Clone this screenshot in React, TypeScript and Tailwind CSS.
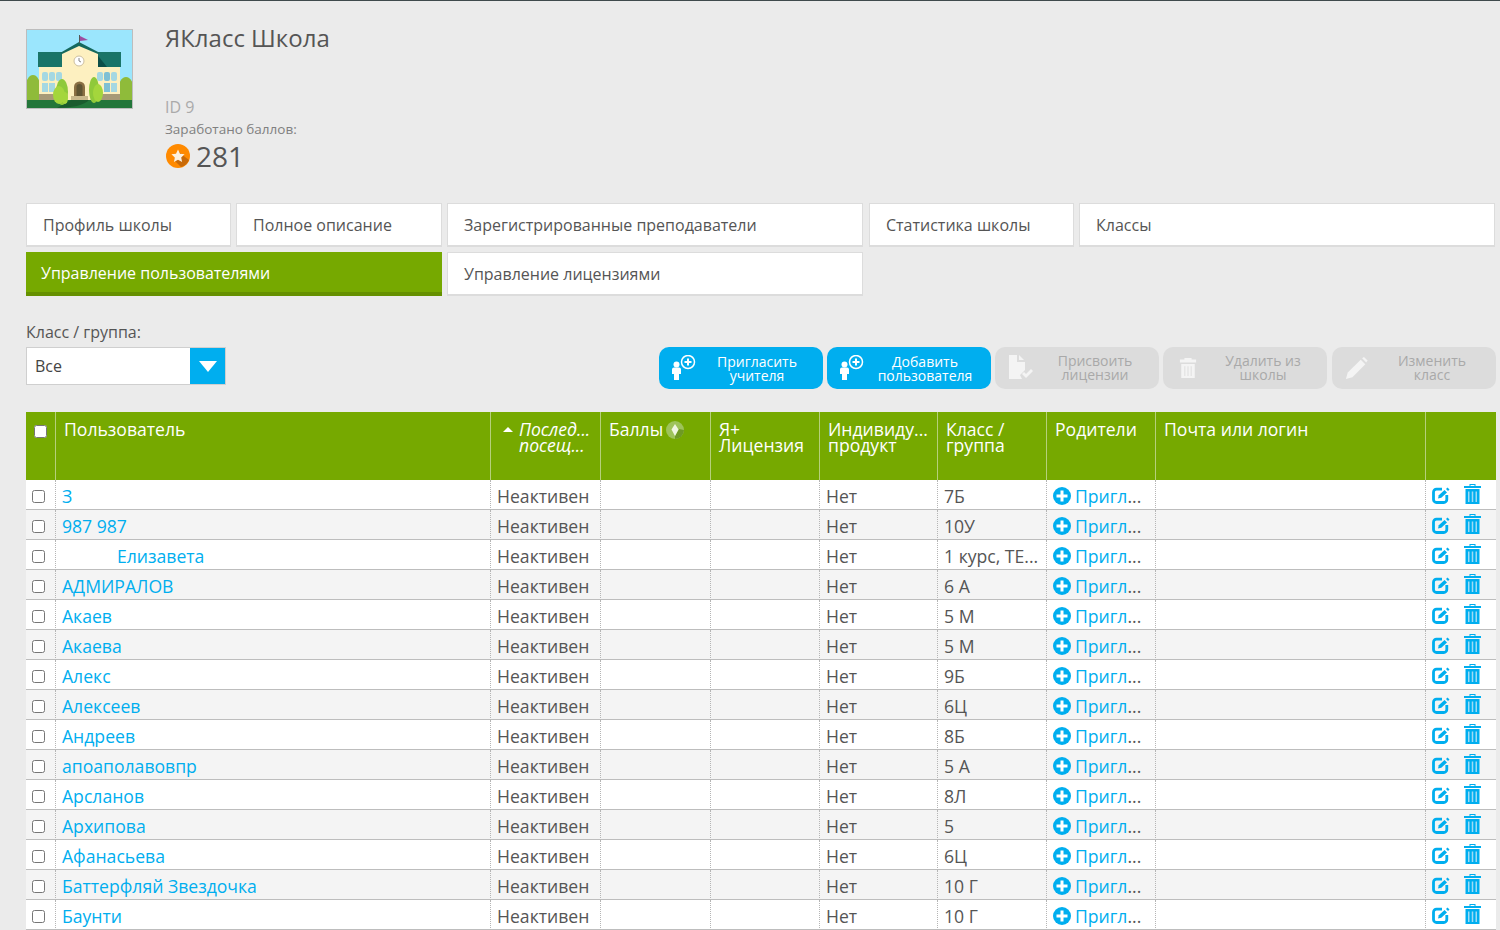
import type { ReactNode } from "react";

const rows = [
  { name: "З", group: "7Б" },
  { name: "987 987", group: "10У" },
  { name: "Елизавета", group: "1 курс, ТЕ...", indent: true },
  { name: "АДМИРАЛОВ", group: "6 А" },
  { name: "Акаев", group: "5 М" },
  { name: "Акаева", group: "5 М" },
  { name: "Алекс", group: "9Б" },
  { name: "Алексеев", group: "6Ц" },
  { name: "Андреев", group: "8Б" },
  { name: "апоаполавовпр", group: "5 А" },
  { name: "Арсланов", group: "8Л" },
  { name: "Архипова", group: "5" },
  { name: "Афанасьева", group: "6Ц" },
  { name: "Баттерфляй Звездочка", group: "10 Г" },
  { name: "Баунти", group: "10 Г" },
];

const SchoolPicture = () => (
  <svg viewBox="0 0 105 78" className="block w-full h-full">
    <rect width="105" height="78" fill="#9be6fd" />
    <ellipse cx="6" cy="60" rx="8" ry="15" fill="#8fbb3a" />
    <ellipse cx="99" cy="61" rx="8" ry="14" fill="#8fbb3a" />
    <rect x="12" y="37" width="81" height="30" fill="#fdf0c0" />
    <rect x="12" y="64" width="81" height="6" fill="#a79a78" />
    <path d="M11 22h25v15H11z" fill="#1a7468" />
    <path d="M68 22h26v15H76z" fill="#1a7468" />
    <path d="M68 22l12 15H68z" fill="#0c4f48" />
    <path d="M35 22l17-8 19 8v48H35z" fill="#fdf0c0" />
    <path d="M33 23l19-11 21 11-2 1-19-8-17 8z" fill="#14685d" />
    <rect x="52" y="5" width="1" height="8" fill="#555" />
    <path d="M53 6l8 4-8 1z" fill="#9c4da0" />
    <circle cx="52" cy="31" r="5" fill="#fff" stroke="#ccbfa0" />
    <path d="M52 28v3l2 1" stroke="#555" fill="none" strokeWidth="0.7" />
    <g fill="#a5d8e2">
      <rect x="15" y="42" width="6" height="9" rx="2" />
      <rect x="22" y="42" width="6" height="9" rx="2" />
      <rect x="29" y="42" width="6" height="9" rx="2" />
      <rect x="15" y="53" width="6" height="9" />
      <rect x="22" y="53" width="6" height="9" />
      <rect x="70" y="42" width="6" height="9" rx="2" />
      <rect x="77" y="42" width="6" height="9" rx="2" fill="#7fc0d4" />
      <rect x="84" y="42" width="6" height="9" rx="2" />
      <rect x="77" y="53" width="6" height="9" fill="#7fc0d4" />
      <rect x="84" y="53" width="6" height="9" />
    </g>
    <path d="M47 68V57a5.500 5.500 0 0 1 11 0v11z" fill="#8a6f43" />
    <path d="M49.500 67V57a3 3 0 0 1 6 0v10z" fill="#5f5433" />
    <rect x="44" y="66" width="17" height="4" fill="#c9b88c" />
    <rect x="0" y="70" width="105" height="8" fill="#23763a" />
    <path d="M30 78c14 0 28-3 32-8H44z" fill="#1a5c2e" />
    <ellipse cx="35" cy="62" rx="6" ry="13" fill="#8fc93a" />
    <ellipse cx="32" cy="65" rx="6" ry="9" fill="#a4d63c" />
    <ellipse cx="38" cy="68" rx="3" ry="6" fill="#a4d63c" />
    <ellipse cx="67" cy="60" rx="5" ry="13" fill="#8fc93a" />
    <ellipse cx="71" cy="63" rx="5" ry="9" fill="#a4d63c" />
  </svg>
);

const StarBadge = () => (
  <svg viewBox="0 0 24 24" className="w-6 h-6 shrink-0">
    <circle cx="12" cy="12" r="12" fill="#ff8a00" />
    <path d="M8 16l4-9 7 6 4 3a12 12 0 0 1-8 7z" fill="#c96a08" />
    <path d="M12 5.500l2 4.200 4.600.6-3.400 3.100.9 4.600-4.100-2.300-4.100 2.300.9-4.600-3.400-3.100 4.600-.6z" fill="#fdf1df" />
  </svg>
);

const UserPlus = () => (
  <svg viewBox="0 0 26 26" className="w-[26px] h-[26px]" fill="#fff">
    <circle cx="5.500" cy="9.500" r="3" />
    <path d="M1 14.500a2 2 0 0 1 2-2h5a2 2 0 0 1 2 2V19H8v6H3v-6H1z" />
    <circle cx="17" cy="7" r="6.500" fill="none" stroke="#fff" strokeWidth="1.500" />
    <path d="M16 3.500h2V6h2.500v2H18v2.500h-2V8h-2.500V6H16z" />
  </svg>
);

const FileCheck = () => (
  <svg viewBox="0 0 26 28" className="w-[26px] h-[28px]" fill="#f4f4f4">
    <path d="M2 1h8v7h8v8l-5 5 2 4H2z" />
    <path d="M12 1l5 5h-5z" />
    <path d="M15 20l2-2 2 2 5-5 2 2-7 7z" />
  </svg>
);

const GreyTrash = () => (
  <svg viewBox="0 0 20 24" className="w-[18px] h-[22px]" fill="#f4f4f4">
    <path d="M6 1h8v1.500h5V6H1V2.500h5z" />
    <path d="M2.500 7.500h15V23h-15zM6 10v11h1V10zm3.500 0v11h1V10zM13 10v11h1V10z" fillRule="evenodd" />
  </svg>
);

const GreyPencil = () => (
  <svg viewBox="0 0 26 26" className="w-[24px] h-[24px]" fill="#f4f4f4">
    <path d="M1 25l2-7L17 4l5 5L8 23z" />
    <path d="M18.500 2.500l2-1.500 4 4-1.500 2z" />
  </svg>
);

const ActionButton = ({ icon, lines, active }: { icon: ReactNode; lines: string[]; active?: boolean }) => (
  <div
    className={`w-[164px] h-[42px] rounded-[10px] flex items-center pl-[11px] ${
      active ? "bg-[#00aeef] text-white" : "bg-[#dcdcdc] text-[#a9a9a9]"
    }`}
  >
    <div className="w-[28px] flex justify-center shrink-0">{icon}</div>
    <div className={`flex-1 text-center text-[14px] leading-[14px] ${active ? "pr-[7px] pt-[2px]" : "pr-[3px]"}`}>
      {lines.map((l) => (
        <div key={l}>{l}</div>
      ))}
    </div>
  </div>
);

const Tab = ({ label, width, active }: { label: string; width: string; active?: boolean }) => (
  <div
    className={`${width} h-[44px] flex items-center text-[16px] ${
      active
        ? "bg-[#76a900] border-b-[4px] border-[#659000] text-white pl-[15px] pt-[2px]"
        : "bg-white border-2 border-[#dcdcdc] border-t-[1px] border-x-[1px] text-[#555] pl-[16px]"
    }`}
  >
    {label}
  </div>
);

const Th = ({ children }: { children?: ReactNode }) => (
  <th className="align-top text-left font-normal text-white text-[17.6px] leading-[16px] px-2 pt-[9px] border-r border-[#b6d07a]">
    {children}
  </th>
);

const Td = ({ children, className = "text-[#555]" }: { children?: ReactNode; className?: string }) => (
  <td
    className={`h-[30px] p-0 pl-[6px] pt-[2px] whitespace-nowrap overflow-hidden text-[17.6px] leading-[24px] border-r border-b border-r-[#b5b5b5] border-b-[#bdbdbd] [border-right-style:dotted] ${className}`}
  >
    {children}
  </td>
);

const App = () => {
  return (
    <div className="h-[930px] w-[1500px] overflow-hidden bg-[#ebebeb] border-t border-[#3f4a4c] font-['Open_Sans',sans-serif]">
      <div className="flex pt-[28px] pl-[26px] h-[202px]">
        <div className="w-[107px] h-[80px] border border-[#bdbdbd] shrink-0">
          <SchoolPicture />
        </div>
        <div className="ml-[32px] flex flex-col">
          <h1 className="text-[24px] leading-[20px] -mt-[1px] text-[#555] font-normal">ЯКласс Школа</h1>
          <div className="text-[16px] leading-[20px] text-[#aaa] mt-[49px]">ID 9</div>
          <div className="text-[13.5px] leading-[18px] text-[#808080] mt-[3px]">Заработано баллов:</div>
          <div className="flex items-center gap-[6px] pl-[1px] mt-[2px]">
            <StarBadge />
            <span className="text-[28px] leading-[32px] text-[#555]">281</span>
          </div>
        </div>
      </div>

      <div className="pl-[26px] flex flex-col gap-[5px]">
        <div className="flex gap-[5px]">
          <Tab label="Профиль школы" width="w-[205px]" />
          <Tab label="Полное описание" width="w-[206px]" />
          <Tab label="Зарегистрированные преподаватели" width="w-[416px]" />
          <div className="w-px -ml-[5px]" />
          <Tab label="Статистика школы" width="w-[205px]" />
          <Tab label="Классы" width="w-[416px]" />
        </div>
        <div className="flex gap-[5px]">
          <Tab label="Управление пользователями" width="w-[416px]" active />
          <Tab label="Управление лицензиями" width="w-[416px]" />
        </div>
      </div>

      <div className="flex justify-between pl-[26px] pr-[4px] mt-[26px] h-[90px]">
        <div>
          <div className="text-[16px] leading-[20px] text-[#555]">Класс / группа:</div>
          <div className="mt-[5px] w-[200px] h-[38px] bg-white border border-[#cfcfcf] flex items-center justify-between">
            <span className="pl-[8px] text-[16px] text-[#444]">Все</span>
            <div className="w-[35px] h-full bg-[#00aeef] flex items-center justify-center">
              <div className="w-0 h-0 border-x-[9px] border-x-transparent border-t-[11px] border-t-white" />
            </div>
          </div>
        </div>
        <div className="flex gap-[4px] pt-[25px] h-[67px]">
          <ActionButton active icon={<UserPlus />} lines={["Пригласить", "учителя"]} />
          <ActionButton active icon={<UserPlus />} lines={["Добавить", "пользователя"]} />
          <ActionButton icon={<FileCheck />} lines={["Присвоить", "лицензии"]} />
          <ActionButton icon={<GreyTrash />} lines={["Удалить из", "школы"]} />
          <div className="w-px -ml-[4px]" />
          <ActionButton icon={<GreyPencil />} lines={["Изменить", "класс"]} />
        </div>
      </div>

      <div className="pl-[26px]">
        <table className="w-[1470px] table-fixed border-separate border-spacing-0">
          <colgroup>
            <col className="w-[30px]" />
            <col className="w-[435px]" />
            <col className="w-[110px]" />
            <col className="w-[110px]" />
            <col className="w-[109px]" />
            <col className="w-[118px]" />
            <col className="w-[109px]" />
            <col className="w-[109px]" />
            <col className="w-[270px]" />
            <col className="w-[70px]" />
          </colgroup>
          <thead>
            <tr className="bg-[#76a900] h-[68px]">
              <th className="align-middle p-0 border-r border-[#b6d07a] pb-[32px]">
                <input type="checkbox" className="w-[13px] h-[13px] align-middle" />
              </th>
              <Th>Пользователь</Th>
              <th className="align-top text-left font-normal text-white italic text-[17.6px] leading-[16px] pt-[9px] pl-[12px] border-r border-[#b6d07a]">
                <div className="flex">
                  <div className="w-0 h-0 mt-[6px] mr-[6px] border-x-[5px] border-x-transparent border-b-[5px] border-b-white shrink-0" />
                  <div>
                    Послед...
                    <br />
                    посещ...
                  </div>
                </div>
              </th>
              <Th>
                <span className="flex items-start gap-[3px]">
                  Баллы
                  <svg viewBox="0 0 18 18" className="w-[18px] h-[18px]">
                    <circle cx="9" cy="9" r="9" fill="#9ec35a" />
                    <path d="M9 18a9 9 0 0 0 9-9l-5-1-4 7z" fill="#6f9a24" />
                    <path d="M9 3l3.500 5.500L9 15l-3.500-6.500z" fill="#f0f6e2" />
                  </svg>
                </span>
              </Th>
              <Th>
                Я+
                <br />
                Лицензия
              </Th>
              <Th>
                Индивиду...
                <br />
                продукт
              </Th>
              <Th>
                Класс /
                <br />
                группа
              </Th>
              <Th>Родители</Th>
              <Th>Почта или логин</Th>
              <th className="p-0" />
            </tr>
          </thead>
          <tbody>
            {rows.map((r, i) => (
              <tr key={r.name} className={i % 2 ? "bg-[#f4f4f4]" : "bg-white"}>
                <td className="h-[30px] p-0 text-center border-r border-b border-r-[#b5b5b5] border-b-[#bdbdbd] [border-right-style:dotted] pr-[4px]">
                  <input type="checkbox" className="w-[13px] h-[13px] align-middle" />
                </td>
                <Td className={r.indent ? "text-[#00aeef] !pl-[61px]" : "text-[#00aeef]"}>{r.name}</Td>
                <Td>Неактивен</Td>
                <Td />
                <Td />
                <Td>Нет</Td>
                <Td>{r.group}</Td>
                <Td>
                  <span className="flex items-center gap-[4px]">
                    <svg viewBox="0 0 18 18" className="w-[18px] h-[18px] shrink-0">
                      <circle cx="9" cy="9" r="9" fill="#00aeef" />
                      <path d="M7.500 3.500h3v4h4v3h-4v4h-3v-4h-4v-3h4z" fill="#fff" />
                    </svg>
                    <span>
                      <span className="text-[#00aeef]">Пригл</span>...
                    </span>
                  </span>
                </Td>
                <Td />
                <td className="h-[30px] p-0 pl-[6px] border-b border-b-[#bdbdbd]">
                  <span className="flex items-center gap-[14px] -mt-[2px]">
                    <svg viewBox="0 0 18 17" className="w-[18px] h-[17px] mt-[4px]" fill="none">
                      <path
                        d="M10 2.200H4.500a3 3 0 0 0-3 3v7.300a3 3 0 0 0 3 3h7.300a3 3 0 0 0 3-3V8"
                        stroke="#00aeef"
                        strokeWidth="2.800"
                      />
                      <path d="M6 11.500l.8-3.300L12.500 3l2.500 2.500-5.700 5.300z" fill="#00aeef" />
                      <path d="M15.500 0.500L17.500 2.500l-1.500 1.500-2-2z" fill="#00aeef" />
                    </svg>
                    <svg viewBox="0 0 17 20" className="w-[17px] h-[20px]">
                      <path d="M5.500 0h6v2h5.500v2H0V2h5.500zM6.500 1v1h4V1z" fill="#00aeef" fillRule="evenodd" />
                      <path d="M1.500 5h14v15h-14z" fill="#00aeef" />
                      <path d="M4 7.500V18h1.500V7.500zM7.750 7.500V18h1.500V7.500zM11.500 7.500V18H13V7.500z" fill="#9fdcf5" />
                    </svg>
                  </span>
                </td>
              </tr>
            ))}
          </tbody>
        </table>
      </div>
    </div>
  );
};

export default App;
